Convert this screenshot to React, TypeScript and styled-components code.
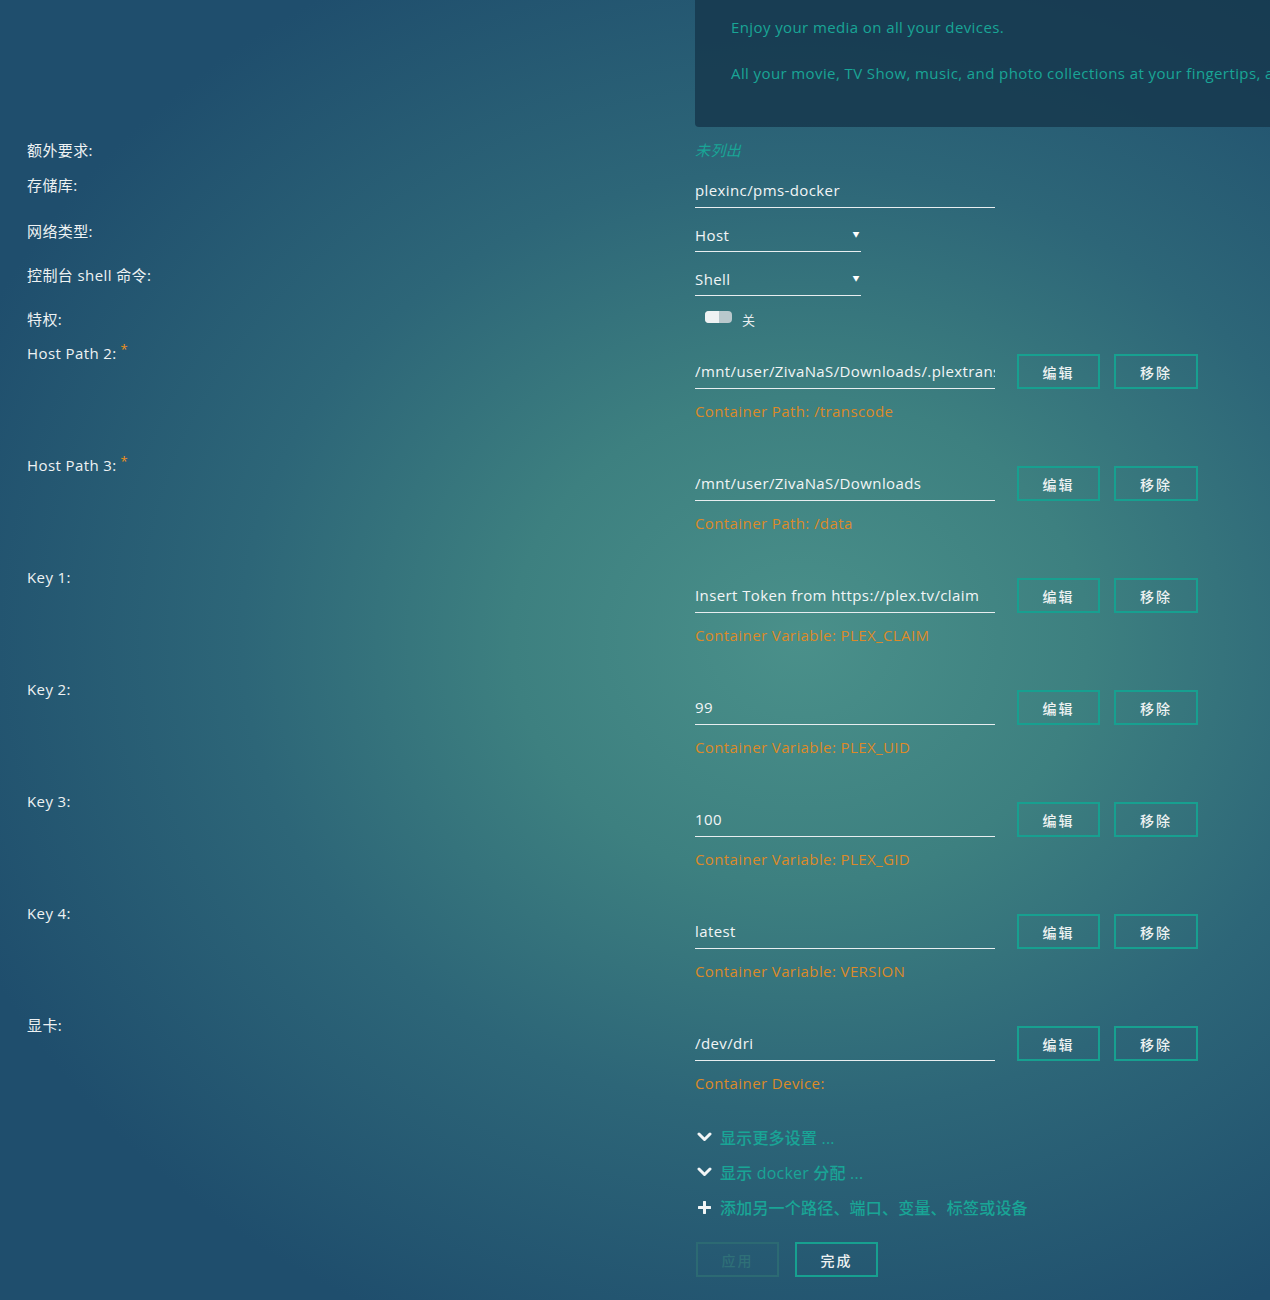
import React from "react";
import styled, { createGlobalStyle } from "styled-components";

const GlobalStyle = createGlobalStyle`
  html, body { margin: 0; padding: 0; }
  body {
    width: 1270px;
    min-height: 1300px;
    background: radial-gradient(ellipse 900px 760px at 800px 640px, #4a908a 0%, #3d8080 32%, #2d6678 62%, #1f4e6d 100%);
    background-color: #1f4e6d;
    font-family: "Open Sans", "Noto Sans CJK SC", sans-serif;
    color: #eef2f3;
    overflow: hidden;
  }
`;

const teal = "#19a596";
const orange = "#dc8a28";

const Page = styled.div`
  width: 1270px;
  height: 1300px;
  overflow: hidden;
  letter-spacing: 0.4px;
`;

const Banner = styled.div`
  margin-left: 695px;
  height: 127px;
  background: rgba(22, 56, 78, 0.85);
  border-bottom-left-radius: 4px;
  padding: 17px 0 0 36px;
  box-sizing: border-box;
`;

const BannerText = styled.p`
  margin: 0 0 26px 0;
  color: ${teal};
  font-size: 15px;
  line-height: 20px;
  white-space: nowrap;
`;

const Form = styled.div`
  padding: 13px 0 0 27px;
`;

const Row = styled.div<{ $gap: number }>`
  display: grid;
  grid-template-columns: 668px 1fr;
  margin-bottom: ${(p) => p.$gap}px;
`;

const Label = styled.div`
  font-size: 15px;
  line-height: 20px;
  color: #eef2f3;
  white-space: nowrap;
`;

const Required = styled.sup`
  color: #f0901c;
  font-size: 13px;
  line-height: 0;
  margin-left: 4px;
  vertical-align: 5px;
`;

const ValueCol = styled.div<{ $top?: number }>`
  padding-top: ${(p) => p.$top || 0}px;
  display: flex;
  flex-direction: column;
  align-items: flex-start;
`;

const Unlisted = styled.div`
  font-size: 15px;
  line-height: 20px;
  color: ${teal};
  font-style: italic;
`;

const TextField = styled.div<{ $w: number; $h: number }>`
  width: ${(p) => p.$w}px;
  height: ${(p) => p.$h}px;
  box-sizing: border-box;
  border-bottom: 1px solid #e8eef0;
  padding-bottom: 2px;
  font-size: 15px;
  line-height: 20px;
  color: #f2f5f6;
  display: flex;
  align-items: center;
  justify-content: space-between;
  white-space: nowrap;
  overflow: hidden;
`;

const Caret = styled.span`
  font-size: 7px;
  color: #fff;
  margin-right: 1px;
`;

const SwitchWrap = styled.div`
  display: flex;
  align-items: center;
  height: 20px;
  padding-left: 10px;
  gap: 10px;
`;

const SwitchTrack = styled.div`
  width: 27px;
  height: 12px;
  border-radius: 4px;
  background: #b9c8cc;
  display: flex;
  margin-top: -4px;
`;

const SwitchKnob = styled.div`
  width: 14px;
  height: 12px;
  border-radius: 4px 0 0 4px;
  background: #eef2f3;
`;

const SwitchText = styled.span`
  font-size: 13px;
  color: #e8eef0;
`;

const FieldLine = styled.div`
  display: flex;
  align-items: flex-end;
`;

const Button = styled.div<{ $disabled?: boolean; $w?: number }>`
  width: ${(p) => p.$w || 83}px;
  height: 35px;
  box-sizing: border-box;
  border: 2px solid ${(p) => (p.$disabled ? "#2c6a73" : "#17a090")};
  color: ${(p) => (p.$disabled ? "#2f7078" : "#eef2f2")};
  font-size: 14px;
  font-weight: 500;
  letter-spacing: 2px;
  display: flex;
  align-items: center;
  justify-content: center;
`;

const FieldButtons = styled.div`
  display: flex;
  gap: 14px;
  margin-left: 22px;
`;

const SubLabel = styled.div`
  margin-top: 12px;
  font-size: 15px;
  line-height: 20px;
  color: ${orange};
  white-space: nowrap;
`;

const Links = styled.div`
  margin-left: 695px;
  display: flex;
  flex-direction: column;
  gap: 15px;
  margin-top: 2px;
`;

const LinkRow = styled.div`
  display: flex;
  align-items: center;
  gap: 7px;
  height: 20px;
  font-size: 16px;
  font-weight: 500;
  letter-spacing: 0.2px;
  color: ${teal};
  white-space: nowrap;
`;

const IconBox = styled.span`
  width: 18px;
  display: flex;
  justify-content: center;
`;

const Actions = styled.div`
  margin: 25px 0 0 696px;
  display: flex;
  gap: 16px;
`;

const Chevron = () => (
  <svg width="15" height="10" viewBox="0 0 15 10">
    <path d="M2 2 L7.5 7.5 L13 2" stroke="#f2f5f6" strokeWidth="3" fill="none" strokeLinecap="round" strokeLinejoin="round" />
  </svg>
);

const Plus = () => (
  <svg width="13" height="13" viewBox="0 0 13 13">
    <path d="M6.5 1 V12 M1 6.5 H12" stroke="#f2f5f6" strokeWidth="3" strokeLinecap="round" />
  </svg>
);

type Entry = { label: string; required?: boolean; value: string; sub: string };

const entries: Entry[] = [
  { label: "Host Path 2:", required: true, value: "/mnt/user/ZivaNaS/Downloads/.plextranscode", sub: "Container Path: /transcode" },
  { label: "Host Path 3:", required: true, value: "/mnt/user/ZivaNaS/Downloads", sub: "Container Path: /data" },
  { label: "Key 1:", value: "Insert Token from https://plex.tv/claim", sub: "Container Variable: PLEX_CLAIM" },
  { label: "Key 2:", value: "99", sub: "Container Variable: PLEX_UID" },
  { label: "Key 3:", value: "100", sub: "Container Variable: PLEX_GID" },
  { label: "Key 4:", value: "latest", sub: "Container Variable: VERSION" },
  { label: "显卡:", value: "/dev/dri", sub: "Container Device:" },
];

export default function App() {
  return (
    <Page>
      <GlobalStyle />
      <Banner>
        <BannerText>Enjoy your media on all your devices.</BannerText>
        <BannerText>
          All your movie, TV Show, music, and photo collections at your fingertips, anywhere you go.
        </BannerText>
      </Banner>
      <Form>
        <Row $gap={15}>
          <Label>额外要求:</Label>
          <ValueCol>
            <Unlisted>未列出</Unlisted>
          </ValueCol>
        </Row>
        <Row $gap={13}>
          <Label>存储库:</Label>
          <ValueCol>
            <TextField $w={300} $h={33}>plexinc/pms-docker</TextField>
          </ValueCol>
        </Row>
        <Row $gap={13}>
          <Label>网络类型:</Label>
          <ValueCol>
            <TextField $w={166} $h={31}>
              Host<Caret>▼</Caret>
            </TextField>
          </ValueCol>
        </Row>
        <Row $gap={13}>
          <Label>控制台 shell 命令:</Label>
          <ValueCol>
            <TextField $w={166} $h={31}>
              Shell<Caret>▼</Caret>
            </TextField>
          </ValueCol>
        </Row>
        <Row $gap={14}>
          <Label>特权:</Label>
          <ValueCol>
            <SwitchWrap>
              <SwitchTrack>
                <SwitchKnob />
              </SwitchTrack>
              <SwitchText>关</SwitchText>
            </SwitchWrap>
          </ValueCol>
        </Row>
        {entries.map((e) => (
          <Row $gap={34} key={e.label}>
            <Label>
              {e.label}
              {e.required && <Required>*</Required>}
            </Label>
            <ValueCol $top={11}>
              <FieldLine>
                <TextField $w={300} $h={33}>{e.value}</TextField>
                <FieldButtons>
                  <Button $w={83}>编辑</Button>
                  <Button $w={84}>移除</Button>
                </FieldButtons>
              </FieldLine>
              <SubLabel>{e.sub}</SubLabel>
            </ValueCol>
          </Row>
        ))}
      </Form>
      <Links>
        <LinkRow>
          <IconBox><Chevron /></IconBox>显示更多设置 ...
        </LinkRow>
        <LinkRow>
          <IconBox><Chevron /></IconBox>显示 docker 分配 ...
        </LinkRow>
        <LinkRow>
          <IconBox><Plus /></IconBox>添加另一个路径、端口、变量、标签或设备
        </LinkRow>
      </Links>
      <Actions>
        <Button $disabled>应用</Button>
        <Button>完成</Button>
      </Actions>
    </Page>
  );
}
